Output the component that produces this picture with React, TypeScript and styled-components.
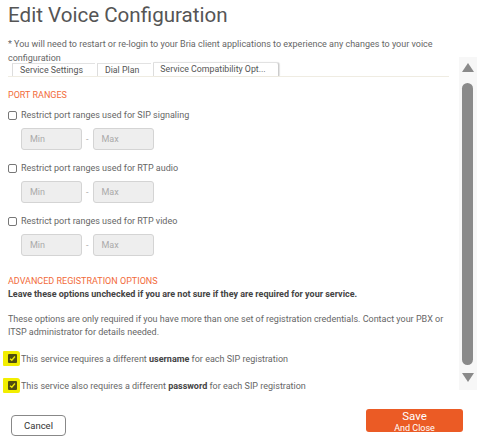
import React from "react";
import styled, { createGlobalStyle } from "styled-components";

const Global = createGlobalStyle`
  html, body { margin: 0; padding: 0; background: #fff; }
  body { font-family: Roboto, "Noto Sans", Arial, sans-serif; color: #555; }
  * { box-sizing: border-box; }
`;

const Page = styled.div`
  width: 477px;
  height: 444px;
  padding: 0 0 0 8px;
  display: flex;
  flex-direction: column;
  overflow: hidden;
`;

const Title = styled.h1`
  margin: 3px 0 0 0;
  font-size: 20.6px;
  line-height: 24px;
  font-weight: 400;
  color: #555;
`;

const Note = styled.p`
  margin: 10px 0 0 0;
  font-size: 9px;
  line-height: 14px;
  color: #666;
`;

const Body = styled.div`
  display: flex;
  margin-top: -3px;
  height: 328px;
`;

const Main = styled.div`
  flex: 1;
  display: flex;
  flex-direction: column;
`;

const TabRow = styled.div`
  display: flex;
  align-items: flex-end;
  padding-left: 4px;
  margin-right: 10px;
  border-bottom: 1px solid #efece2;
  height: 15px;
`;

const Tab = styled.div<{ $active?: boolean }>`
  height: ${(p) => (p.$active ? "14px" : "13px")};
  padding: 0 ${(p) => (p.$active ? "12px" : "12px")} 0 ${(p) => (p.$active ? "6px" : "7px")};
  margin-right: 2px;
  font-size: 8.8px;
  line-height: 13px;
  color: #555;
  border-left: 1px solid #ddd;
  border-top: 1px solid #e2e2e2;
  border-right: ${(p) => (p.$active ? "1px solid #ccc" : "none")};
  border-top-right-radius: ${(p) => (p.$active ? "3px" : "0")};
  box-shadow: ${(p) => (p.$active ? "1px 0 1px rgba(0,0,0,0.12)" : "none")};
  background: #fff;
  white-space: nowrap;
`;

const Content = styled.div`
  flex: 1;
  padding-top: 12px;
`;

const SectionTitle = styled.div<{ $top?: number }>`
  font-size: 9px;
  line-height: 13px;
  color: #f26b3a;
  text-transform: uppercase;
  margin-top: ${(p) => p.$top ?? 0}px;
`;

const CheckRow = styled.label<{ $top?: number; $tight?: boolean }>`
  display: flex;
  align-items: center;
  gap: ${(p) => (p.$tight ? "1px" : "4px")};
  font-size: 9px;
  line-height: 14px;
  color: #666;
  margin-top: ${(p) => p.$top ?? 0}px;
  b { font-weight: 700; color: #444; }
`;

const Box = styled.span`
  width: 9px;
  height: 9px;
  flex: none;
  border: 1px solid #777;
  border-radius: 2px;
  background: #fff;
`;

const Highlight = styled.span`
  display: flex;
  align-items: center;
  justify-content: flex-end;
  width: 17px;
  height: 15px;
  margin-left: -5px;
  padding-right: 3px;
  background: #f2ee00;
  border-radius: 1px 3px 2px 1px;
  flex: none;
`;

const CheckedBox = styled.span`
  width: 9px;
  height: 9px;
  border-radius: 1px;
  background: #4f4d10;
  display: flex;
  align-items: center;
  justify-content: center;
`;

const RangeRow = styled.div`
  display: flex;
  align-items: center;
  margin: 6px 0 0 13px;
  gap: 4px;
`;

const RangeInput = styled.div`
  width: 61px;
  height: 22px;
  background: #eee;
  border: 1px solid #d4d4d4;
  border-radius: 3px;
  font-size: 9px;
  color: #aaa;
  padding-left: 8px;
  display: flex;
  align-items: center;
`;

const Dash = styled.span`
  font-size: 9px;
  color: #aaa;
`;

const Bold = styled.div`
  font-size: 9px;
  line-height: 13px;
  font-weight: 700;
  color: #444;
`;

const Para = styled.p`
  margin: 12px 0 0 0;
  font-size: 9px;
  line-height: 13px;
  color: #666;
  padding-right: 8px;
`;

const ScrollBar = styled.div`
  width: 18px;
  margin-top: -5px;
  background: #f7f7f7;
  display: flex;
  flex-direction: column;
  align-items: center;
  padding: 6px 1px 0 0;
`;

const ArrowUp = styled.div`
  width: 0;
  height: 0;
  border-left: 6px solid transparent;
  border-right: 6px solid transparent;
  border-bottom: 9px solid #8a8a8a;
`;

const ArrowDown = styled.div`
  width: 0;
  height: 0;
  border-left: 6px solid transparent;
  border-right: 6px solid transparent;
  border-top: 9px solid #8a8a8a;
  margin-top: 8px;
`;

const Thumb = styled.div`
  width: 11px;
  height: 282px;
  margin-top: 11px;
  background: #8a8a8a;
  border-radius: 6px;
`;

const Footer = styled.div`
  display: flex;
  justify-content: space-between;
  align-items: flex-start;
  padding: 0 14px 0 3px;
  margin-top: 19px;
`;

const CancelButton = styled.button`
  margin-top: 6px;
  width: 55px;
  height: 21px;
  background: #fff;
  border: 1px solid #888;
  border-radius: 4px;
  font-family: inherit;
  font-size: 9.5px;
  color: #333;
  padding: 0;
`;

const SaveButton = styled.button`
  width: 97px;
  height: 23px;
  background: #eb5b25;
  border: none;
  border-radius: 3px;
  color: #fff;
  font-family: inherit;
  padding: 1px 0 0 0;
  overflow: hidden;
  display: flex;
  flex-direction: column;
  align-items: center;
`;

const SaveMain = styled.span`
  font-size: 11.5px;
  line-height: 12px;
`;

const SaveSub = styled.span`
  font-size: 9px;
  line-height: 12px;
`;

function Check() {
  return (
    <Highlight>
      <CheckedBox>
        <svg width="7" height="7" viewBox="0 0 8 8">
          <path d="M1.2 4.2 L3.2 6 L6.8 1.8" stroke="#ece800" strokeWidth="1.6" fill="none" />
        </svg>
      </CheckedBox>
    </Highlight>
  );
}

function Range() {
  return (
    <RangeRow>
      <RangeInput>Min</RangeInput>
      <Dash>-</Dash>
      <RangeInput>Max</RangeInput>
    </RangeRow>
  );
}

export default function App() {
  return (
    <>
      <Global />
      <Page>
        <Title>Edit Voice Configuration</Title>
        <Note>
          * You will need to restart or re-login to your Bria client applications to experience any changes to your voice configuration
        </Note>
        <Body>
          <Main>
            <TabRow>
              <Tab>Service Settings</Tab>
              <Tab>Dial Plan</Tab>
              <Tab $active>Service Compatibility Opt...</Tab>
            </TabRow>
            <Content>
              <SectionTitle>Port Ranges</SectionTitle>
              <CheckRow $top={6}>
                <Box />
                Restrict port ranges used for SIP signaling
              </CheckRow>
              <Range />
              <CheckRow $top={11}>
                <Box />
                Restrict port ranges used for RTP audio
              </CheckRow>
              <Range />
              <CheckRow $top={11}>
                <Box />
                Restrict port ranges used for RTP video
              </CheckRow>
              <Range />
              <SectionTitle $top={19}>Advanced Registration Options</SectionTitle>
              <Bold>Leave these options unchecked if you are not sure if they are required for your service.</Bold>
              <Para>
                These options are only required if you have more than one set of registration credentials. Contact your PBX or ITSP administrator for details needed.
              </Para>
              <CheckRow $top={12} $tight>
                <Check />
                <span>
                  This service requires a different <b>username</b> for each SIP registration
                </span>
              </CheckRow>
              <CheckRow $top={12} $tight>
                <Check />
                <span>
                  This service also requires a different <b>password</b> for each SIP registration
                </span>
              </CheckRow>
            </Content>
          </Main>
          <ScrollBar>
            <ArrowUp />
            <Thumb />
            <ArrowDown />
          </ScrollBar>
        </Body>
        <Footer>
          <CancelButton>Cancel</CancelButton>
          <SaveButton>
            <SaveMain>Save</SaveMain>
            <SaveSub>And Close</SaveSub>
          </SaveButton>
        </Footer>
      </Page>
    </>
  );
}
